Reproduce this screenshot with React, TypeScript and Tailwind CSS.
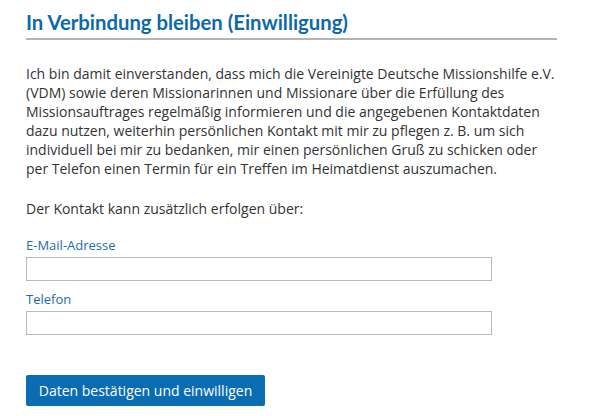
import React, { useState } from 'react';

const body = { fontFamily: '"Open Sans", "Liberation Sans", sans-serif' };
const head = { fontFamily: 'Lato, "Open Sans", sans-serif' };

const App: React.FC = () => {
  const [email, setEmail] = useState('');
  const [phone, setPhone] = useState('');

  return (
    <div className="min-h-[416px] bg-white pl-[26px] text-[#333]" style={body}>
      <div className="w-[531px]">
        <h2
          className="border-b-2 border-[#b4b4b4] pt-[9px] pb-[3px] text-[20.3px] leading-[26px] font-bold text-[#0b69ab]"
          style={head}
        >
          In Verbindung bleiben (Einwilligung)
        </h2>

        <p className="mt-[24px] text-[14px] leading-[19px]">
          Ich bin damit einverstanden, dass mich die Vereinigte Deutsche Missionshilfe e.V.
          <br />
          (VDM) sowie deren Missionarinnen und Missionare über die Erfüllung des
          <br />
          Missionsauftrages regelmäßig informieren und die angegebenen Kontaktdaten
          <br />
          dazu nutzen, weiterhin persönlichen Kontakt mit mir zu pflegen z. B. um sich
          <br />
          individuell bei mir zu bedanken, mir einen persönlichen Gruß zu schicken oder
          <br />
          per Telefon einen Termin für ein Treffen im Heimatdienst auszumachen.
        </p>

        <p className="mt-[21px] text-[14px] leading-[19px]">Der Kontakt kann zusätzlich erfolgen über:</p>

        <form className="mt-[18px]" onSubmit={(e) => e.preventDefault()}>
          <label className="block">
            <span className="block text-[13px] leading-[18px] text-[#1a6daa]">E-Mail-Adresse</span>
            <input
              type="email"
              value={email}
              onChange={(e) => setEmail(e.target.value)}
              className="mt-[3px] block h-[24px] w-[466px] border border-[#b9b9b9] bg-white px-2 text-[13px] outline-none"
            />
          </label>

          <label className="mt-[9px] block">
            <span className="block text-[13px] leading-[18px] text-[#1a6daa]">Telefon</span>
            <input
              type="tel"
              value={phone}
              onChange={(e) => setPhone(e.target.value)}
              className="mt-[3px] block h-[24px] w-[466px] border border-[#b9b9b9] bg-white px-2 text-[13px] outline-none"
            />
          </label>

          <button
            type="submit"
            className="mt-[40px] h-[31px] w-[239px] rounded-[2px] bg-[#0a6cb2] text-[14px] font-medium text-white"
          >
            Daten bestätigen und einwilligen
          </button>
        </form>
      </div>
    </div>
  );
};

export default App;
